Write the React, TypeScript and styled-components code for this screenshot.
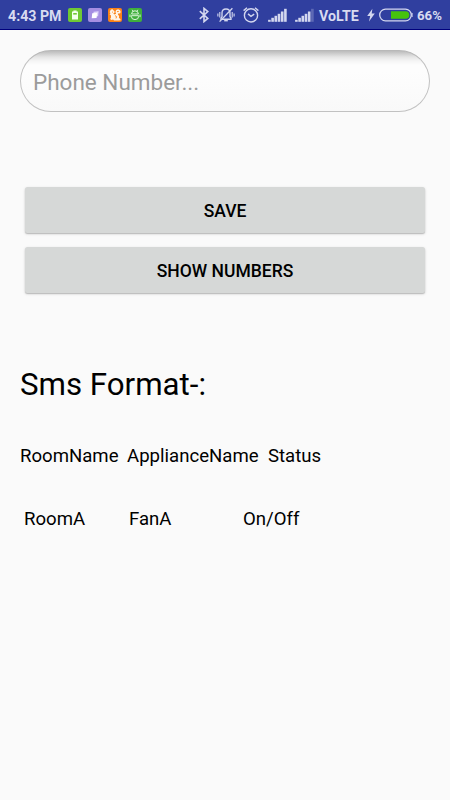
import React from 'react';
import styled, { createGlobalStyle } from 'styled-components';

const GlobalStyle = createGlobalStyle`
  * { box-sizing: border-box; }
  body { margin: 0; background: #fafafa; font-family: Roboto, sans-serif; color: #000; }
`;

const Screen = styled.div`
  width: 450px;
  height: 800px;
  overflow: hidden;
  background: #fafafa;
`;

const StatusBar = styled.header`
  display: flex;
  align-items: center;
  justify-content: space-between;
  height: 30px;
  padding: 0 8px;
  background: #303f9f;
  border-bottom: 1px solid #00007c;
  color: #d8dbf0;
`;

const StatusGroup = styled.div<{ $width: number }>`
  display: flex;
  align-items: center;
  width: ${(p) => p.$width}px;
  height: 29px;
`;

const StatusText = styled.span<{ $width: number; $size?: number }>`
  width: ${(p) => p.$width}px;
  font-size: ${(p) => p.$size ?? 14.2}px;
  line-height: 18px;
  font-weight: 700;
  white-space: pre;
  padding-top: 2px;
`;

const Glyph = styled.svg<{ $gap: number }>`
  display: block;
  flex: none;
  margin-left: ${(p) => p.$gap}px;
  margin-top: 1px;
`;

const Spacer = styled.i<{ $width: number }>`
  flex: none;
  width: ${(p) => p.$width}px;
`;

const Content = styled.main`
  display: flex;
  flex-direction: column;
  padding: 20px 20px 0;
`;

const PhoneInput = styled.input`
  display: block;
  width: 410px;
  height: 62px;
  padding: 1px 12px 0;
  border: 1px solid #c1c1c1;
  border-top-color: #b8b8b8;
  border-radius: 31px;
  outline: none;
  background: linear-gradient(#bcbcbc 0, #c9c9c9 2px, #e5e5e5 6px, #f5f5f5 10px, #fdfdfd 14px, #fdfdfd 20px, #f9f9f9 100%);
  font-family: Roboto, sans-serif;
  font-size: 22.5px;
  color: #000;
  &::placeholder { color: #9b9b9b; opacity: 1; }
`;

const Actions = styled.div`
  display: flex;
  flex-direction: column;
  gap: 14px;
  margin: 75px 5px 0;
`;

const ActionButton = styled.button`
  height: 46px;
  padding: 2px 0 0;
  border: 0;
  border-radius: 2.5px;
  background: #d6d8d7;
  box-shadow: 0 1px 1px rgba(0, 0, 0, 0.16), 0 1px 3px rgba(0, 0, 0, 0.16);
  font-family: Roboto, sans-serif;
  font-size: 17.5px;
  font-weight: 500;
  color: #000;
`;

const Heading = styled.h1`
  margin: 73px 0 0;
  font-size: 31.25px;
  line-height: 38px;
  font-weight: 400;
`;

const FormatRow = styled.div<{ $columns: string; $top: number; $indent?: number }>`
  display: grid;
  grid-template-columns: ${(p) => p.$columns};
  margin-top: ${(p) => p.$top}px;
  padding-left: ${(p) => p.$indent ?? 0}px;
  font-size: 18.6px;
  line-height: 22px;
  white-space: nowrap;
`;

const LIGHT = '#d3d7ef';

const BatteryApp = () => (
  <Glyph $gap={7} width="14" height="14" viewBox="0 0 14 14">
    <rect width="14" height="14" rx="2" fill="#70c934" />
    <path d="M5.4 2.5h3.2v1H10v8H4v-8h1.4z" fill="#f4fff0" />
    <path d="M5.2 5h3.6v1.6H5.2z" fill="#70c934" />
  </Glyph>
);

const LayersApp = () => (
  <Glyph $gap={6} width="14" height="14" viewBox="0 0 14 14">
    <rect width="14" height="14" rx="2" fill="#a58ee2" />
    <path d="M5.6 3.7l5-.5-.5 5-4.8.5z" fill="#e0d7fb" />
    <path d="M4.2 5.3l4.8-.4-.4 5.1-4.9.3z" fill="#fff" />
  </Glyph>
);

const SquirrelApp = () => (
  <Glyph $gap={6} width="14" height="14" viewBox="0 0 14 14">
    <rect width="14" height="14" rx="2" fill="#fb8217" />
    <path
      d="M1.6 4.2L2.6 2l1.6-.9.9 1 1.3.9.2 1.6-1.3.8 1.1 1 1.7-.7L7.4 4l.8-1.9 1.9-.8 2 .9.6 1.8-.7 1.5-1.5-.3-.6 1.2 1.2 1.5-.2 2 1.3.9.5 1.4-2.3.4-4.3-.2-1-1-1.7.5-1.3-.8.9-1.6-.1-2.2-1.3-.9.9-1.4z"
      fill="#fff4e8"
    />
    <path d="M9 4l1.1-.8.8.8M7 7.6l1.6 1-.6 1.8M4 4l.9.2" fill="none" stroke="#fb8217" strokeWidth=".9" />
  </Glyph>
);

const AndroidApp = () => (
  <Glyph $gap={6} width="14" height="14" viewBox="0 0 14 14">
    <rect width="14" height="14" rx="2" fill="#3fae3c" />
    <g fill="none" stroke="#e5fae4" strokeWidth=".95">
      <path d="M4.2 1.8l1 1.5M9.8 1.8l-1 1.5M3.6 6a3.4 3.2 0 0 1 6.8 0zM3.4 7.7v.8a3.6 3.1 0 0 0 7.2 0v-.8zM2 6.5v2.6M12 6.5v2.6" />
    </g>
  </Glyph>
);

const Bluetooth = () => (
  <Glyph $gap={0} width="10" height="16" viewBox="0 0 10 16">
    <path d="M.8 4.2l8 7.2L5 14.6V1.4l3.8 3.2-8 7.2" fill="none" stroke={LIGHT} strokeWidth="1.6" />
  </Glyph>
);

const SilentBell = () => (
  <Glyph $gap={8} width="18" height="16" viewBox="0 0 18 16">
    <g fill="none" stroke={LIGHT} strokeWidth="1.35">
      <path d="M4 12.2V11l1-1.2V6c0-2.4 1.5-4 4-4s4 1.6 4 4v3.8l1 1.2v1.2z" />
      <path d="M2.6 14.6L15.4 1.2" />
      <path d="M.9 6.4v3M17.1 6.4v3M2.8 5v5.6M15.2 5v5.6" strokeWidth="1.1" />
    </g>
    <path d="M7.2 12.8h3.6v1.6H7.2z" fill={LIGHT} />
  </Glyph>
);

const AlarmClock = () => (
  <Glyph $gap={8} width="16" height="16" viewBox="0 0 16 16">
    <g fill="none" stroke={LIGHT} strokeWidth="1.4">
      <circle cx="8" cy="8.4" r="6.6" />
      <path d="M.6 3.6L4 .8M15.4 3.6L12 .8M5 6.9l3 2.4 3.2-2.2" />
    </g>
  </Glyph>
);

const Signal = ({ gap, weak }: { gap: number; weak?: boolean }) => (
  <Glyph $gap={gap} width="19" height="16" viewBox="0 0 19 16">
    {[2, 4, 6, 8, 10.3, 13].map((h, i) => (
      <rect
        key={h}
        x={0.1 + i * 3.2}
        y={14.8 - h}
        width="2.6"
        height={h}
        fill={LIGHT}
        opacity={weak && i === 5 ? 0.28 : 1}
      />
    ))}
  </Glyph>
);

const Bolt = () => (
  <Glyph $gap={8} width="8" height="14" viewBox="0 0 8 14">
    <path d="M5.4.8L.2 8h3L2 13.6l5.8-8H4.7z" fill={LIGHT} />
  </Glyph>
);

const Battery = () => (
  <Glyph $gap={4} width="34" height="14" viewBox="0 0 34 14">
    <rect x=".7" y="1.2" width="31.6" height="11.6" rx="5.8" fill="none" stroke={LIGHT} strokeWidth="1.3" />
    <path d="M12 3.2h14.5a3.8 3.8 0 0 1 0 7.6H12z" fill="#46c30d" />
    <path d="M33.1 5v4" stroke={LIGHT} strokeWidth="1" />
  </Glyph>
);

export default function App() {
  return (
    <Screen>
      <GlobalStyle />
      <StatusBar>
        <StatusGroup $width={135}>
          <StatusText $width={53}>4:43 PM</StatusText>
          <BatteryApp />
          <LayersApp />
          <SquirrelApp />
          <AndroidApp />
        </StatusGroup>
        <StatusGroup $width={243}>
          <Bluetooth />
          <SilentBell />
          <AlarmClock />
          <Signal gap={9} />
          <Signal gap={8} weak />
          <Spacer $width={5} />
          <StatusText $width={40}>VoLTE</StatusText>
          <Bolt />
          <Battery />
          <Spacer $width={4} />
          <StatusText $width={25} $size={13.2}>66%</StatusText>
        </StatusGroup>
      </StatusBar>
      <Content>
        <PhoneInput type="tel" placeholder="Phone Number..." />
        <Actions>
          <ActionButton>SAVE</ActionButton>
          <ActionButton>SHOW NUMBERS</ActionButton>
        </Actions>
        <Heading>Sms Format-:</Heading>
        <FormatRow $columns="107px 141px 1fr" $top={41}>
          <span>RoomName</span>
          <span>ApplianceName</span>
          <span>Status</span>
        </FormatRow>
        <FormatRow $columns="105px 114px 1fr" $top={41} $indent={4}>
          <span>RoomA</span>
          <span>FanA</span>
          <span>On/Off</span>
        </FormatRow>
      </Content>
    </Screen>
  );
}
